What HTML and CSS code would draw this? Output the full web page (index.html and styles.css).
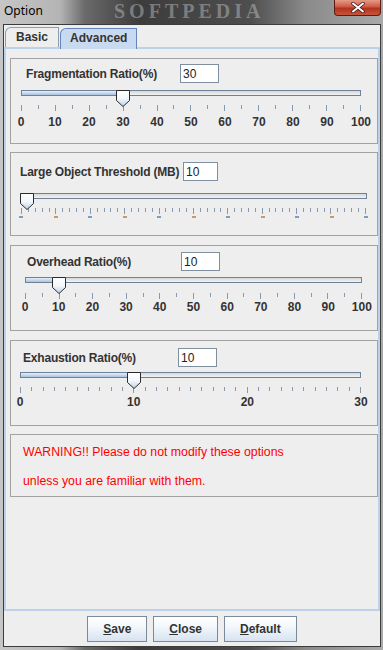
FILE: index.html
```html
<!DOCTYPE html>
<html lang="en">
<head>
    <meta charset="UTF-8">
    <title>Option</title>
    <link rel="stylesheet" href="styles.css">
</head>
<body>

<div class="window">
    <div class="titlebar">
        <span class="title">Option</span>
        <span class="watermark">SOFTPEDIA</span>
        <span class="close-btn">
            <svg width="14" height="11" viewBox="0 0 14 11">
                <path d="M2 1.5L12 9.5M12 1.5L2 9.5" stroke="#3a1510" stroke-width="3.4" stroke-linecap="round"/>
                <path d="M2 1.5L12 9.5M12 1.5L2 9.5" stroke="#fff" stroke-width="2" stroke-linecap="round"/>
            </svg>
        </span>
    </div>

    <div class="client">
        <div class="tabs">
            <div class="tab">Basic</div>
            <div class="tab tab-active">Advanced</div>
        </div>

        <div class="tab-panel">

            <div class="group group-frag">
                <div class="field-row">
                    <label class="field-label">Fragmentation Ratio(%)</label>
                    <input class="field-input" type="text" value="30">
                </div>
                <div class="slider">
                    <div class="track"><div class="fill" style="width: 30%"></div></div>
                    <span class="thumb" style="left: calc(30% - 7px)">
                        <svg width="14" height="17" viewBox="0 0 14 17"><defs><linearGradient id="tg" x1="0" y1="0" x2="0" y2="1"><stop offset="0" stop-color="#ffffff"/><stop offset="0.5" stop-color="#f4f8fc"/><stop offset="1" stop-color="#bcd0e8"/></linearGradient></defs><path d="M0.5 0.5H13.5V10.5L7 16.5L0.5 10.5Z" fill="url(#tg)" stroke="#2b2b2b"/></svg>
                    </span>
                    <div class="ticks" data-count="20" data-major="2"></div>
                    <div class="scale">
                        <span>0</span><span>10</span><span>20</span><span>30</span><span>40</span><span>50</span>
                        <span>60</span><span>70</span><span>80</span><span>90</span><span>100</span>
                    </div>
                </div>
            </div>

            <div class="group group-large">
                <div class="field-row">
                    <label class="field-label">Large Object Threshold (MB)</label>
                    <input class="field-input" type="text" value="10">
                </div>
                <div class="slider">
                    <div class="track"><div class="fill" style="width: 1.7%"></div></div>
                    <span class="thumb" style="left: calc(1.7% - 7px)">
                        <svg width="14" height="17" viewBox="0 0 14 17"><path d="M0.5 0.5H13.5V10.5L7 16.5L0.5 10.5Z" fill="url(#tg)" stroke="#2b2b2b"/></svg>
                    </span>
                    <div class="ticks" data-count="50" data-major="5"></div>
                    <div class="dashes">
                        <span></span><span></span><span></span><span></span><span></span><span></span>
                        <span></span><span></span><span></span><span></span><span></span>
                    </div>
                </div>
            </div>

            <div class="group group-overhead">
                <div class="field-row">
                    <label class="field-label">Overhead Ratio(%)</label>
                    <input class="field-input" type="text" value="10">
                </div>
                <div class="slider">
                    <div class="track"><div class="fill" style="width: 10%"></div></div>
                    <span class="thumb" style="left: calc(10% - 7px)">
                        <svg width="14" height="17" viewBox="0 0 14 17"><path d="M0.5 0.5H13.5V10.5L7 16.5L0.5 10.5Z" fill="url(#tg)" stroke="#2b2b2b"/></svg>
                    </span>
                    <div class="ticks" data-count="20" data-major="2"></div>
                    <div class="scale">
                        <span>0</span><span>10</span><span>20</span><span>30</span><span>40</span><span>50</span>
                        <span>60</span><span>70</span><span>80</span><span>90</span><span>100</span>
                    </div>
                </div>
            </div>

            <div class="group group-exhaust">
                <div class="field-row">
                    <label class="field-label">Exhaustion Ratio(%)</label>
                    <input class="field-input" type="text" value="10">
                </div>
                <div class="slider">
                    <div class="track"><div class="fill" style="width: 33.33%"></div></div>
                    <span class="thumb" style="left: calc(33.33% - 7px)">
                        <svg width="14" height="17" viewBox="0 0 14 17"><path d="M0.5 0.5H13.5V10.5L7 16.5L0.5 10.5Z" fill="url(#tg)" stroke="#2b2b2b"/></svg>
                    </span>
                    <div class="ticks" data-count="30" data-major="10"></div>
                    <div class="scale">
                        <span>0</span><span>10</span><span>20</span><span>30</span>
                    </div>
                </div>
            </div>

            <div class="group warning">
                <p>WARNING!! Please do not modify these options</p>
                <p>unless you are familiar with them.</p>
            </div>

        </div>

        <div class="button-bar">
            <button class="btn"><u>S</u>ave</button>
            <button class="btn"><u>C</u>lose</button>
            <button class="btn"><u>D</u>efault</button>
        </div>
    </div>
</div>

<script>
    // build the tick marks under each slider
    document.querySelectorAll(".ticks").forEach(function(row) {
        let count = parseInt(row.dataset.count);
        let major = parseInt(row.dataset.major);
        for (let i = 0; i <= count; i++) {
            let tick = document.createElement("span");
            tick.className = (i % major === 0) ? "tick major" : "tick";
            row.appendChild(tick);
        }
    });
</script>

</body>
</html>
```

FILE: styles.css
```css
body {
    margin: 0;
    font-family: "Liberation Sans", Arial, sans-serif;
    font-size: 12px;
}
.window {
    width: 383px;
    height: 650px;
    display: flex;
    flex-direction: column;
    background: linear-gradient(90deg, #c6c6c6 0, #b4b4b4 60px, #6a6a6a 85px, #3c3c3c 140px, #4e4e4e 250px, #8a8a8a 305px, #a9a9a9 383px);
}
.titlebar {
    height: 24px;
    display: flex;
    align-items: flex-start;
    position: relative;
    overflow: hidden;
}
.title {
    margin: 3px 0 0 4px;
    font-family: "Noto Sans", sans-serif;
    font-size: 12px;
    line-height: 16px;
    color: #000;
}
.watermark {
    position: absolute;
    left: 114px;
    top: 0;
    font-family: "Liberation Serif", serif;
    font-weight: bold;
    font-size: 20px;
    line-height: 22px;
    letter-spacing: 4px;
    color: rgba(200, 200, 200, 0.45);
}
.close-btn {
    margin-left: auto;
    margin-right: 2px;
    width: 45px;
    height: 15px;
    border: 1px solid #5a1d12;
    border-top: none;
    border-radius: 0 0 4px 4px;
    background: linear-gradient(#e59a88, #cf5a42 45%, #b3321e 55%, #c8543c);
    display: flex;
    align-items: center;
    justify-content: center;
    position: relative;
}
.client {
    flex: 1;
    margin: 0 2px 3px 3px;
    background: #eeeeee;
    border: 1px solid #3c3c3c;
    display: flex;
    flex-direction: column;
}
.tabs {
    height: 22px;
    display: flex;
    align-items: flex-end;
    gap: 1px;
    padding-left: 1px;
}
.tab {
    height: 19px;
    line-height: 19px;
    padding: 0 10px;
    font-weight: bold;
    color: #333;
    background: #eeeeee;
    border: 1px solid #8d9cae;
    border-bottom: none;
    border-radius: 6px 0 0 0;
}
.tab-active {
    height: 20px;
    padding: 0 9px;
    background: #c8daef;
    border-color: #6583bd;
    margin-bottom: -2px;
    position: relative;
}
.tab-panel {
    height: 564px;
    box-sizing: border-box;
    border: 2px solid #bcd1ea;
    padding: 9px 0 0 4px;
    display: flex;
    flex-direction: column;
    gap: 8px;
}
.group {
    border: 1px solid #a2a2a2;
    box-sizing: border-box;
    height: 86px;
}
.group-large {
    height: 84px;
    margin-bottom: 1px;
}
.group-overhead {
    margin-bottom: 1px;
}
.field-row {
    display: flex;
    align-items: center;
    height: 19px;
}
.field-label {
    font-weight: bold;
    color: #333;
    white-space: nowrap;
    letter-spacing: -0.2px;
}
.field-input {
    box-sizing: border-box;
    height: 19px;
    width: 39px;
    margin: 0;
    padding: 0 2px;
    border: 1px solid #7f8fa0;
    background: #fff;
    font-family: "Liberation Sans", Arial, sans-serif;
    font-size: 12px;
    color: #222;
}
.slider {
    position: relative;
}
.track {
    margin-top: 4px;
    height: 6px;
    box-sizing: border-box;
    border: 1px solid #6f8196;
    background: linear-gradient(#d8d8d8, #f2f2f2);
}
.fill {
    height: 100%;
    background: linear-gradient(#e6eef8, #a9c2e1);
}
.thumb {
    position: absolute;
    top: 0;
    width: 14px;
    height: 17px;
}
.thumb svg {
    display: block;
}
.ticks {
    display: flex;
    justify-content: space-between;
    align-items: flex-start;
    height: 6px;
    margin-top: 9px;
}
.tick {
    width: 1px;
    height: 4px;
    background: #8799ae;
}
.tick.major {
    height: 6px;
}
.scale {
    display: flex;
    justify-content: space-between;
    margin-top: 4px;
}
.scale span {
    width: 0;
    display: flex;
    justify-content: center;
    white-space: nowrap;
    font-weight: bold;
    line-height: 14px;
    color: #333;
}
.dashes {
    display: flex;
    justify-content: space-between;
    margin-top: 2px;
    height: 2px;
}
.dashes span {
    width: 0;
    display: flex;
    justify-content: center;
}
.dashes span::before {
    content: "";
    flex: none;
    width: 4px;
    height: 2px;
    background: #7d9cc0;
}
.dashes span:nth-child(even)::before {
    background: #c9996a;
}

/* per group placement */
.group-frag {
    padding: 5px 0 0 15px;
}
.group-frag .field-label {
    width: 154px;
}
.group-frag .slider {
    margin: 7px 0 0 -5px;
    width: 340px;
}

.group-large {
    padding: 9px 0 0 9px;
}
.group-large .field-label {
    width: 163px;
}
.group-large .field-input {
    width: 35px;
}
.group-large .slider {
    margin: 12px 0 0 1px;
    width: 345px;
}
.group-large .track {
    margin: 5px -1px 0 -1px;
}

.group-overhead {
    padding: 6px 0 0 16px;
}
.group-overhead .field-label {
    width: 154px;
}
.group-overhead .slider {
    margin: 6px 0 0 -2px;
    width: 337px;
}
.group-overhead .ticks {
    margin-top: 10px;
}
.group-overhead .scale {
    margin-top: 1px;
}

.group-exhaust {
    padding: 7px 0 0 12px;
}
.group-exhaust .field-label {
    width: 155px;
}
.group-exhaust .slider {
    margin: 5px 0 0 -3px;
    width: 341px;
}
.group-exhaust .track {
    margin-top: 5px;
}
.group-exhaust .scale {
    margin-top: 2px;
}

.warning {
    height: 63px;
    padding: 3px 0 0 12px;
}
.warning p {
    margin: 0;
    line-height: 29px;
    font-size: 12.3px;
    color: #ff0000;
}

.button-bar {
    flex: 1;
    display: flex;
    justify-content: center;
    align-items: flex-start;
    gap: 6px;
    padding-top: 5px;
}
.btn {
    height: 26px;
    padding: 0 15px;
    border: 1px solid #7a8a9b;
    border-radius: 0;
    background: linear-gradient(#ffffff, #f3f7fb 40%, #d6e3f1);
    font-family: "Liberation Sans", Arial, sans-serif;
    font-size: 12px;
    font-weight: bold;
    color: #333;
    cursor: pointer;
}
```
